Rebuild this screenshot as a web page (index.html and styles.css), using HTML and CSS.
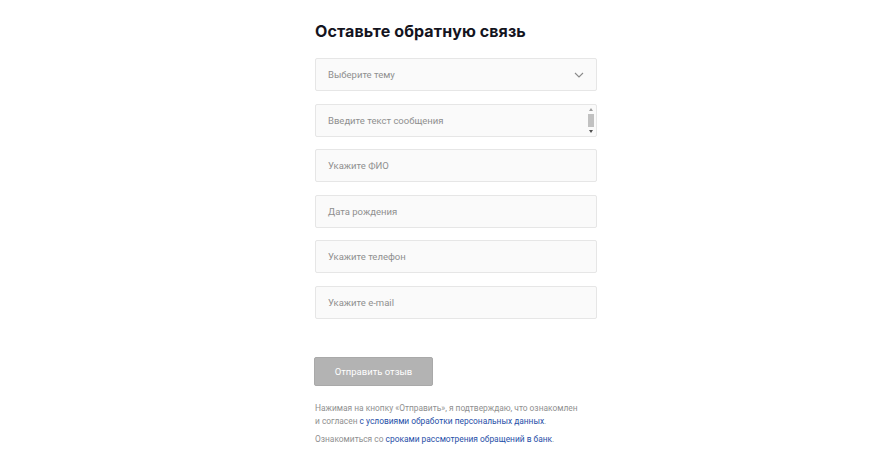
FILE: index.html
```html
<!DOCTYPE html>
<html lang="ru">
<head>
<meta charset="utf-8">
<link rel="stylesheet" href="styles.css">
</head>
<body>
<div class="page">
  <form class="form">
    <h1 class="title">Оставьте обратную связь</h1>
    <div class="field field-select">
      <span class="ph">Выберите тему</span>
      <svg class="chev" width="10" height="6" viewBox="0 0 10 6"><path d="M1 1l4 4 4-4" fill="none" stroke="#8a8a8a" stroke-width="1.1"/></svg>
    </div>
    <div class="field field-area">
      <span class="ph">Введите текст сообщения</span>
      <div class="scroll">
        <span class="arr up"></span>
        <span class="thumb"></span>
        <span class="arr down"></span>
      </div>
    </div>
    <div class="field"><span class="ph">Укажите ФИО</span></div>
    <div class="field"><span class="ph">Дата рождения</span></div>
    <div class="field"><span class="ph">Укажите телефон</span></div>
    <div class="field"><span class="ph">Укажите e-mail</span></div>
    <button type="button" class="btn">Отправить отзыв</button>
    <p class="note">Нажимая на кнопку «Отправить», я подтверждаю, что ознакомлен<br>и согласен <a class="link">с условиями обработки персональных данных</a>.</p>
    <p class="note note2">Ознакомиться со <a class="link">сроками рассмотрения обращений в банк</a>.</p>
  </form>
</div>
</body>
</html>
```
FILE: styles.css
```css
* { box-sizing: border-box; }
html, body { margin: 0; padding: 0; background: #fff; }
body { font-family: Roboto, "Noto Sans", sans-serif; }
.page { display: flex; justify-content: center; padding-left: 42px; }
.form { width: 282px; display: flex; flex-direction: column; padding-top: 19px; }
.title {
  margin: 0 0 15px;
  font-family: Inter, "Noto Sans", sans-serif;
  font-weight: 700;
  font-size: 16px;
  line-height: 24px;
  color: #14141e;
  letter-spacing: 0.1px;
}
.field {
  height: 33px;
  border: 1px solid #e6e6e6;
  border-radius: 2px;
  background: #fafafa;
  display: flex;
  align-items: center;
  padding: 0 12px;
  margin-bottom: 12.6px;
  position: relative;
}
.ph { font-size: 9.5px; color: #8f8f8f; }
.field-select { justify-content: space-between; padding-right: 12px; }
.chev { display: block; }
.scroll {
  position: absolute;
  right: 1px; top: 1px; bottom: 1px;
  width: 9px;
  display: flex; flex-direction: column; align-items: center;
}
.arr { width: 0; height: 0; border-left: 2.5px solid transparent; border-right: 2.5px solid transparent; margin: 2px 0; }
.up { border-bottom: 3px solid #a0a0a0; }
.down { border-top: 3px solid #505050; }
.thumb { flex: 1; width: 6px; background: #c1c1c1; margin: 1px 0; }
.btn {
  margin-top: 25px;
  align-self: flex-start;
  margin-left: -1px;
  width: 119px;
  height: 29px;
  border: 1px solid #a9a9a9;
  border-radius: 2px;
  background: #b3b3b3;
  color: #fff;
  font-family: Roboto, sans-serif;
  font-size: 9.5px;
  padding: 0;
}
.note {
  margin: 16px 0 0;
  font-size: 8.4px;
  line-height: 13px;
  color: #8f8f8f;
  white-space: nowrap;
}
.note2 { margin-top: 5px; }
.link { color: #1f4fa8; }
```
